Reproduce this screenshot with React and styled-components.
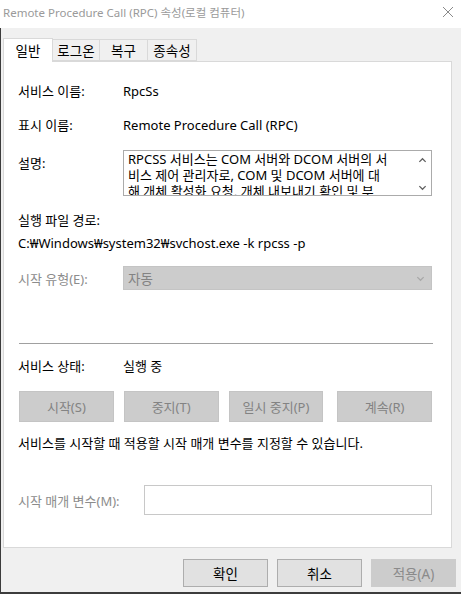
import React from "react";
import styled, { createGlobalStyle } from "styled-components";

const GlobalStyle = createGlobalStyle`
  html, body {
    margin: 0;
    padding: 0;
    background: #f0f0f0;
  }
  body {
    font-family: "Noto Sans", "Noto Sans CJK KR", sans-serif;
    font-size: 13px;
    color: #000;
  }
`;

const Window = styled.div`
  width: 461px;
  height: 594px;
  display: flex;
  flex-direction: column;
  background: #f0f0f0;
  overflow: hidden;
  box-sizing: border-box;
`;

const TitleBar = styled.div`
  height: 28px;
  flex-shrink: 0;
  background: #fff;
  display: flex;
  align-items: center;
  justify-content: space-between;
  padding: 0 7px 4px 3px;
  box-sizing: border-box;
  color: #9a9a9a;
  font-size: 11.5px;
`;

const Body = styled.div`
  flex: 1;
  display: flex;
  flex-direction: column;
  border-left: 1px solid #3c3c3c;
  border-bottom: 2px solid #3c3c3c;
  padding: 0 9px 0 2px;
`;

const TabStrip = styled.div`
  display: flex;
  align-items: flex-end;
  height: 33px;
  flex-shrink: 0;
  position: relative;
  z-index: 1;
`;

const Tab = styled.div`
  width: ${(p) => p.w}px;
  height: ${(p) => (p.active ? 24 : 22)}px;
  box-sizing: border-box;
  display: flex;
  align-items: center;
  justify-content: center;
  padding-bottom: 1px;
  background: ${(p) => (p.active ? "#fff" : "#f0f0f0")};
  border: 1px solid #d9d9d9;
  border-bottom: ${(p) => (p.active ? "none" : "1px solid #d9d9d9")};
  margin-left: ${(p) => (p.active ? 0 : -1)}px;
  margin-bottom: ${(p) => (p.active ? -1 : 0)}px;
  font-size: 13.5px;
`;

const Panel = styled.div`
  height: 487px;
  flex-shrink: 0;
  background: #fff;
  border: 1px solid #d9d9d9;
  box-sizing: border-box;
  padding: 19px 19px 0 14px;
  display: flex;
  flex-direction: column;
`;

const Row = styled.div`
  display: flex;
  align-items: ${(p) => (p.top ? "flex-start" : "center")};
  margin-top: ${(p) => p.mt || 0}px;
  min-height: 18px;
`;

const Label = styled.div`
  width: ${(p) => p.w || 105}px;
  flex-shrink: 0;
  color: ${(p) => (p.dim ? "#8c8c8c" : "#000")};
  padding-top: ${(p) => p.pt || 0}px;
  white-space: nowrap;
`;

const Value = styled.div`
  white-space: nowrap;
`;

const DescBox = styled.div`
  width: 311px;
  height: 46px;
  box-sizing: border-box;
  border: 1px solid #ababab;
  display: flex;
  overflow: hidden;
`;

const DescText = styled.div`
  flex: 1;
  padding: 0 0 0 4px;
  overflow: hidden;
`;

const Line = styled.div`
  white-space: nowrap;
  height: 16px;
  line-height: 16px;
`;

const ScrollBar = styled.div`
  width: 17px;
  display: flex;
  flex-direction: column;
  justify-content: space-between;
  align-items: center;
  padding: 5px 0 3px;
  box-sizing: border-box;
`;

const Select = styled.div`
  width: 312px;
  height: 24px;
  box-sizing: border-box;
  background: #cccccc;
  border: 1px solid #c4c4c4;
  display: flex;
  align-items: center;
  justify-content: space-between;
  padding: 0 6px 0 4px;
  color: #838383;
  font-size: 13.5px;
`;

const Separator = styled.div`
  height: 1px;
  background: #a0a0a0;
  margin: 53px 0 0 1px;
  width: 414px;
`;

const ButtonRow = styled.div`
  display: flex;
  gap: 10px;
  margin-top: 16px;
  padding-left: 1px;
`;

const ActionButton = styled.div`
  width: 95px;
  height: 31px;
  box-sizing: border-box;
  display: flex;
  align-items: center;
  justify-content: center;
  background: #cccccc;
  border: 1px solid #c4c4c4;
  color: #838383;
  font-size: 13px;
  margin-left: ${(p) => p.ml || 0}px;
`;

const Note = styled.div`
  margin-top: 11px;
  white-space: nowrap;
`;

const ParamInput = styled.div`
  width: 290px;
  height: 30px;
  box-sizing: border-box;
  border: 1px solid #c8c8c8;
  background: #fff;
`;

const Footer = styled.div`
  flex: 1;
  display: flex;
  justify-content: flex-end;
  align-items: flex-start;
  gap: 9px;
  padding-top: 11px;
  margin-right: -4px;
`;

const DialogButton = styled.div`
  width: 85px;
  height: 28px;
  box-sizing: border-box;
  display: flex;
  align-items: center;
  justify-content: center;
  background: ${(p) => (p.disabled ? "#cccccc" : "#e1e1e1")};
  border: 1px solid ${(p) => (p.disabled ? "#cccccc" : "#adadad")};
  color: ${(p) => (p.disabled ? "#8a8a8a" : "#000")};
  font-size: 13.5px;
`;

const Chevron = ({ dir = "down", color = "#606060", size = 9 }) => (
  <svg width={size} height={size} viewBox="0 0 10 10">
    <path
      d={dir === "up" ? "M1.5 6.5 L5 3 L8.5 6.5" : "M1.5 3.5 L5 7 L8.5 3.5"}
      fill="none"
      stroke={color}
      strokeWidth="1.4"
    />
  </svg>
);

const CloseIcon = () => (
  <svg width="12" height="12" viewBox="0 0 12 12">
    <path d="M1 1 L11 11 M11 1 L1 11" stroke="#8a8a8a" strokeWidth="1" />
  </svg>
);

export default function App() {
  return (
    <>
      <GlobalStyle />
      <Window>
        <TitleBar>
          <span>Remote Procedure Call (RPC) 속성(로컬 컴퓨터)</span>
          <CloseIcon />
        </TitleBar>
        <Body>
          <TabStrip>
            <Tab active w={50}>일반</Tab>
            <Tab w={48}>로그온</Tab>
            <Tab w={49}>복구</Tab>
            <Tab w={50}>종속성</Tab>
          </TabStrip>
          <Panel>
            <Row>
              <Label>서비스 이름:</Label>
              <Value>RpcSs</Value>
            </Row>
            <Row mt={15}>
              <Label>표시 이름:</Label>
              <Value>Remote Procedure Call (RPC)</Value>
            </Row>
            <Row top mt={16}>
              <Label pt={3}>설명:</Label>
              <DescBox>
                <DescText>
                  <Line>RPCSS 서비스는 COM 서버와 DCOM 서버의 서</Line>
                  <Line>비스 제어 관리자로, COM 및 DCOM 서버에 대</Line>
                  <Line>해 개체 활성화 요청, 개체 내보내기 확인 및 부</Line>
                </DescText>
                <ScrollBar>
                  <Chevron dir="up" />
                  <Chevron dir="down" />
                </ScrollBar>
              </DescBox>
            </Row>
            <Row mt={14}>
              <Label>실행 파일 경로:</Label>
            </Row>
            <Row mt={5}>
              <Value>C:₩Windows₩system32₩svchost.exe -k rpcss -p</Value>
            </Row>
            <Row mt={14}>
              <Label dim>시작 유형(E):</Label>
              <Select>
                <span>자동</span>
                <Chevron color="#a8a8a8" />
              </Select>
            </Row>
            <Separator />
            <Row mt={12}>
              <Label>서비스 상태:</Label>
              <Value>실행 중</Value>
            </Row>
            <ButtonRow>
              <ActionButton>시작(S)</ActionButton>
              <ActionButton>중지(T)</ActionButton>
              <ActionButton>일시 중지(P)</ActionButton>
              <ActionButton ml={4}>계속(R)</ActionButton>
            </ButtonRow>
            <Note>서비스를 시작할 때 적용할 시작 매개 변수를 지정할 수 있습니다.</Note>
            <Row mt={33}>
              <Label dim w={126}>시작 매개 변수(M):</Label>
              <ParamInput />
            </Row>
          </Panel>
          <Footer>
            <DialogButton>확인</DialogButton>
            <DialogButton>취소</DialogButton>
            <DialogButton disabled>적용(A)</DialogButton>
          </Footer>
        </Body>
      </Window>
    </>
  );
}
